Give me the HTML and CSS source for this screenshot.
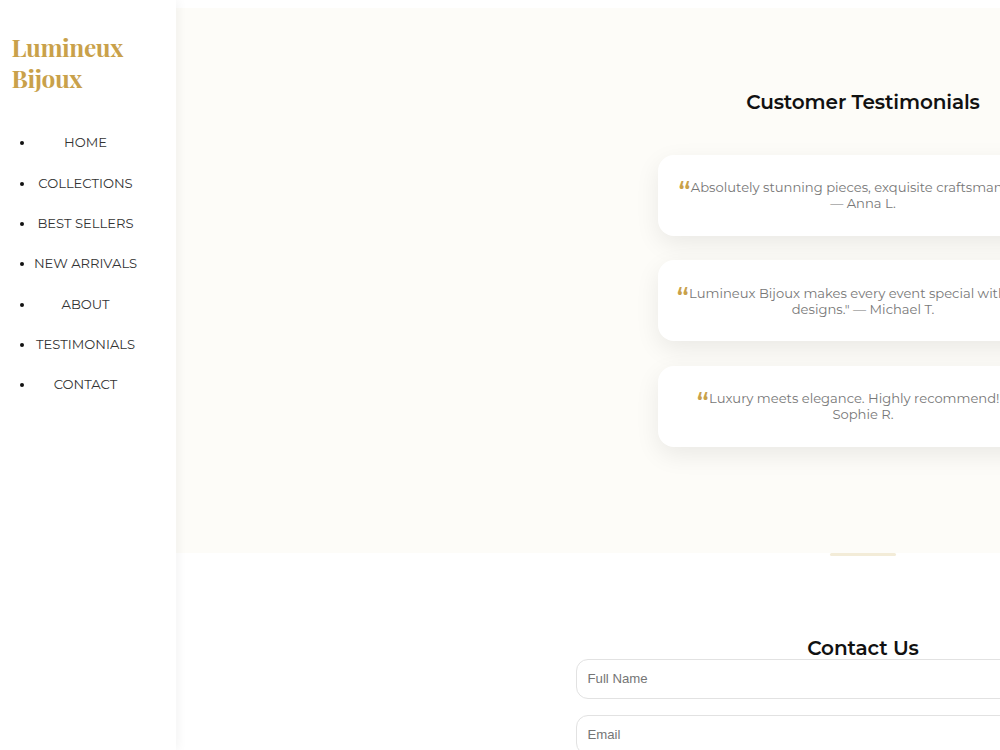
FILE: index.html
```html
<!DOCTYPE html>
<html lang="en">
<head>
<meta charset="utf-8">
<title>Lumineux Bijoux</title>
<link rel="stylesheet" href="styles.css">
</head>
<body>
<div class="layout">
  <aside class="sidebar">
    <h1 class="logo">Lumineux<br>Bijoux</h1>
    <ul class="nav">
      <li><a>HOME</a></li>
      <li><a>COLLECTIONS</a></li>
      <li><a>BEST SELLERS</a></li>
      <li><a>NEW ARRIVALS</a></li>
      <li><a>ABOUT</a></li>
      <li><a>TESTIMONIALS</a></li>
      <li><a>CONTACT</a></li>
    </ul>
  </aside>
  <main class="main">
    <section class="testimonials">
      <h2 class="title">Customer Testimonials</h2>
      <div class="cards">
        <p class="card"><span class="lead"><span class="quote">“</span>Absolutely stunning pieces, exquisite craftsmanship."</span><br>— Anna L.</p>
        <p class="card"><span class="lead lead-wide"><span class="quote">“</span>Lumineux Bijoux makes every event special with fine</span><br>designs." — Michael T.</p>
        <p class="card"><span class="lead lead-narrow"><span class="quote">“</span>Luxury meets elegance. Highly recommend!" —</span><br>Sophie R.</p>
      </div>
    </section>
    <section class="contact">
      <div class="divider"></div>
      <h2 class="title">Contact Us</h2>
      <form class="form">
        <input class="field" placeholder="Full Name">
        <input class="field" placeholder="Email">
      </form>
    </section>
  </main>
</div>
</body>
</html>
```
FILE: styles.css
```css
* { box-sizing: border-box; }
body {
  margin: 0;
  height: 750px;
  overflow: hidden;
  background: #fff;
  color: #111;
  font-family: Montserrat, Inter, sans-serif;
}
.layout { display: flex; width: 1550px; height: 750px; overflow: hidden; }
.sidebar {
  position: relative;
  z-index: 1;
  flex: 0 0 176px;
  padding: 32px 11.5px;
  background: #fff;
  box-shadow: 2px 0 10px rgba(0, 0, 0, .05);
}
.logo {
  margin: 0;
  color: #c9a14a;
  font: bold 24.4px/31px "Playfair Display", "Liberation Serif", serif;
  letter-spacing: -.4px;
}
.nav { margin: 38.2px 0 0; padding: 0 26px 0 23px; font-size: 13.12px; color: #111; }
.nav li { height: 40.33px; line-height: 20px; }
.nav a { display: flex; justify-content: center; margin: 0 -13.5px 0 -15.5px; white-space: nowrap; color: #333; font-weight: 400; }
.main { flex: 0 0 1374px; padding-top: 8px; }
.title {
  margin: 0;
  font-size: 20px;
  font-weight: 600;
  letter-spacing: -.12px;
  line-height: 24px;
  text-align: center;
}
.testimonials { height: 545px; padding-top: 82px; background: #fdfcf8; }
.cards { display: flex; flex-direction: column; align-items: center; gap: 24.6px; margin-top: 41px; }
.card {
  width: 410px;
  height: 80.8px;
  margin: 0;
  padding: 24.2px 0;
  border-radius: 16px;
  background: #fff;
  box-shadow: 0 8px 24px rgba(0, 0, 0, .08);
  color: #777;
  font-size: 13.12px;
  line-height: 16px;
  text-align: center;
  white-space: nowrap;
}
.lead { padding-right: 10px; }
.lead-wide { padding-right: 14px; }
.lead-narrow { padding-right: 8px; }
.quote {
  display: inline-block;
  width: 12px;
  color: #c9a14a;
  font: 500 30px/0 Montserrat, sans-serif;
  text-indent: -.5px;
  vertical-align: -11px;
}
.contact { display: flex; flex-direction: column; align-items: center; }
.divider { width: 66px; height: 3px; border-radius: 2px; background: #f3ecd8; }
.contact .title { margin-top: 80px; }
.form { display: flex; flex-direction: column; gap: 16.6px; margin-top: -.8px; }
.field {
  width: 575px;
  height: 39.4px;
  padding: 0 11px;
  border: 1px solid #e2e2e2;
  border-radius: 12px;
  background: #fff;
  font: 13.2px "Liberation Sans", sans-serif;
}
.field::placeholder { color: #757575; }
```
